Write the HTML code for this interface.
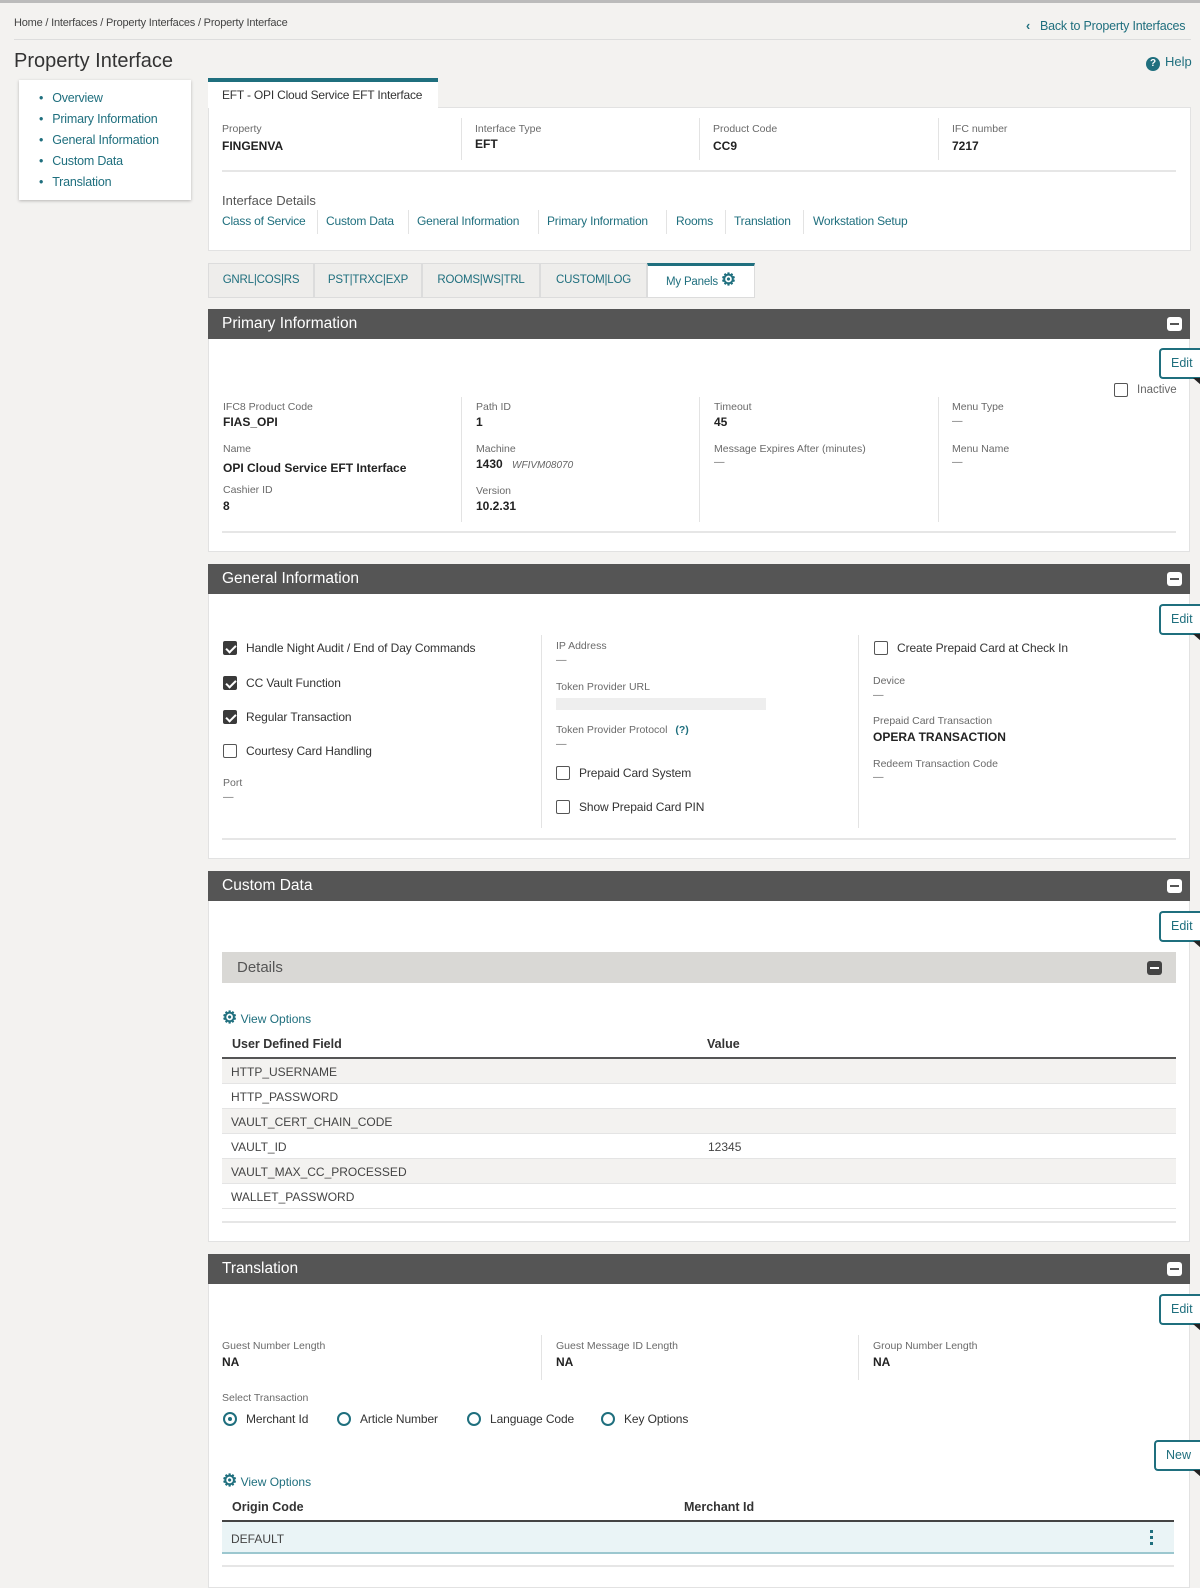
<!DOCTYPE html>
<html><head><meta charset="utf-8"><style>
*{box-sizing:border-box;margin:0;padding:0}
body{width:1200px;height:1588px;background:#f3f2f0;font-family:"Liberation Sans",sans-serif;color:#333;position:relative;overflow:hidden;font-size:12px}
.a{position:absolute;white-space:nowrap}
.lk{color:#1f6f7e}
.lb{font-size:10.5px;color:#6a6a6a}
.v{font-size:12px;font-weight:bold;color:#222}
.box{position:absolute;background:#fff}
.hdr{position:absolute;left:208px;width:982px;height:30px;background:#555;color:#fff;font-size:15.5px;padding:6px 14px}
.min{position:absolute;right:8px;top:8px;width:15px;height:14px;background:#fff;border-radius:3px}
.min:after{content:"";position:absolute;left:3px;top:6px;width:9px;height:2px;background:#555}
.min.dk{background:#444}
.min.dk:after{background:#fff}
.edit{position:absolute;left:1159px;width:42px;height:31px;border:2px solid #1f6f7e;border-right:none;border-radius:4px 0 0 4px;background:#fff;color:#1f6f7e;font-size:12.5px;padding:6px 0 0 10px}
.edit:after{content:"";position:absolute;right:0;bottom:-8px;border-left:8px solid transparent;border-top:7px solid #222}
.vl{position:absolute;width:1px;background:#e3e3e3}
.hl{position:absolute;height:2px;background:#e6e6e6}
.cb{position:absolute;width:14px;height:14px;border:1.5px solid #555;border-radius:2px;background:#fff}
.cb.on{background:#3a3a3a;border-color:#3a3a3a}
.cb.on:after{content:"";position:absolute;left:3.5px;top:0.5px;width:4px;height:8px;border:solid #fff;border-width:0 2px 2px 0;transform:rotate(45deg)}
.rd{position:absolute;width:14px;height:14px;border:2px solid #1f6f7e;border-radius:50%}
.rd.on:after{content:"";position:absolute;left:3px;top:3px;width:4px;height:4px;border-radius:50%;background:#1f6f7e}
.ct{font-size:12px;color:#333;letter-spacing:-0.1px}
.row{position:absolute;left:222px;width:954px;height:25px;border-bottom:1px solid #e4e4e4;font-size:12px;padding:6px 0 0 9px;color:#444}
.tab{position:absolute;top:263px;height:35px;background:#eeedeb;border:1px solid #dcdcdc;color:#1f6f7e;font-size:11.5px;text-align:center;padding-top:10px;letter-spacing:-0.2px}
.gear{font-size:17px;line-height:12px;font-weight:bold}
</style></head><body>
<div class="a" style="left:0;top:0;width:1200px;height:3px;background:#bbb"></div>
<div class="a" style="left:14px;top:17px;font-size:11px;color:#444;letter-spacing:-0.2px">Home / Interfaces / Property Interfaces / Property Interface</div>
<div class="a lk" style="left:1026px;top:19px;font-size:12.5px;letter-spacing:-0.2px"><b style="margin-right:10px">&#8249;</b>Back to Property Interfaces</div>
<div class="a" style="left:14px;top:39px;width:1177px;height:1px;background:#ddd"></div>
<div class="a" style="left:14px;top:50px;font-size:20px;color:#333">Property Interface</div>
<div class="a lk" style="left:1146px;top:54px;font-size:13px"><span style="display:inline-block;width:14px;height:14px;border-radius:50%;background:#1f6f7e;color:#fff;font-size:10px;font-weight:bold;text-align:center;line-height:14px;margin-right:5px">?</span>Help</div>

<div class="box" style="left:19px;top:80px;width:172px;height:120px;box-shadow:0 1px 3px rgba(0,0,0,.25)"></div>
<div class="a lk" style="left:39px;top:88px;font-size:12.5px;line-height:21px;letter-spacing:-0.2px">
<div><span style="margin-right:9px">&#8226;</span>Overview</div>
<div><span style="margin-right:9px">&#8226;</span>Primary Information</div>
<div><span style="margin-right:9px">&#8226;</span>General Information</div>
<div><span style="margin-right:9px">&#8226;</span>Custom Data</div>
<div><span style="margin-right:9px">&#8226;</span>Translation</div></div>

<div class="box" style="left:208px;top:107px;width:983px;height:144px;border:1px solid #e2e2e2"></div>
<div class="box" style="left:208px;top:78px;width:230px;height:30px;border-top:4px solid #1f6f7e"></div>
<div class="a" style="left:222px;top:88px;font-size:12px;letter-spacing:-0.2px">EFT - OPI Cloud Service EFT Interface</div>
<div class="a lb" style="left:222px;top:123px">Property</div><div class="a v" style="left:222px;top:139px">FINGENVA</div>
<div class="a lb" style="left:475px;top:123px">Interface Type</div><div class="a v" style="left:475px;top:137px">EFT</div>
<div class="a lb" style="left:713px;top:123px">Product Code</div><div class="a v" style="left:713px;top:139px">CC9</div>
<div class="a lb" style="left:952px;top:123px">IFC number</div><div class="a v" style="left:952px;top:139px">7217</div>
<div class="vl" style="left:461px;top:118px;height:42px"></div><div class="vl" style="left:699px;top:118px;height:42px"></div><div class="vl" style="left:938px;top:118px;height:42px"></div>
<div class="hl" style="left:222px;top:170px;width:954px"></div>
<div class="a" style="left:222px;top:193px;font-size:13px;color:#555">Interface Details</div>
<div class="a lk" style="left:222px;top:214px;font-size:12px;letter-spacing:-0.2px">Class of Service</div>
<div class="a lk" style="left:326px;top:214px;font-size:12px;letter-spacing:-0.2px">Custom Data</div>
<div class="a lk" style="left:417px;top:214px;font-size:12px;letter-spacing:-0.2px">General Information</div>
<div class="a lk" style="left:547px;top:214px;font-size:12px;letter-spacing:-0.2px">Primary Information</div>
<div class="a lk" style="left:676px;top:214px;font-size:12px;letter-spacing:-0.2px">Rooms</div>
<div class="a lk" style="left:734px;top:214px;font-size:12px;letter-spacing:-0.2px">Translation</div>
<div class="a lk" style="left:813px;top:214px;font-size:12px;letter-spacing:-0.2px">Workstation Setup</div>
<div class="vl" style="left:317px;top:210px;height:24px"></div><div class="vl" style="left:408px;top:210px;height:24px"></div><div class="vl" style="left:538px;top:210px;height:24px"></div><div class="vl" style="left:666px;top:210px;height:24px"></div><div class="vl" style="left:725px;top:210px;height:24px"></div><div class="vl" style="left:803px;top:210px;height:24px"></div>

<div class="tab" style="left:208px;width:106px">GNRL|COS|RS</div>
<div class="tab" style="left:314px;width:108px">PST|TRXC|EXP</div>
<div class="tab" style="left:422px;width:118px">ROOMS|WS|TRL</div>
<div class="tab" style="left:540px;width:107px">CUSTOM|LOG</div>
<div class="tab" style="left:647px;width:108px;background:#fff;border-top:3px solid #1f6f7e;padding-top:8px">My Panels <span class="gear">&#9881;</span></div>

<!-- Primary -->
<div class="box" style="left:208px;top:309px;width:982px;height:243px;border:1px solid #e2e2e2"></div>
<div class="hdr" style="top:309px">Primary Information<div class="min"></div></div>
<div class="edit" style="top:348px">Edit</div>
<div class="cb" style="left:1114px;top:383px"></div><div class="a" style="left:1137px;top:384px;font-size:11.5px;color:#666">Inactive</div>
<div class="a lb" style="left:223px;top:401px">IFC8 Product Code</div><div class="a v" style="left:223px;top:415px">FIAS_OPI</div>
<div class="a lb" style="left:223px;top:443px">Name</div><div class="a v" style="left:223px;top:461px">OPI Cloud Service EFT Interface</div>
<div class="a lb" style="left:223px;top:484px">Cashier ID</div><div class="a v" style="left:223px;top:499px">8</div>
<div class="a lb" style="left:476px;top:401px">Path ID</div><div class="a v" style="left:476px;top:415px">1</div>
<div class="a lb" style="left:476px;top:443px">Machine</div><div class="a v" style="left:476px;top:457px">1430 <i style="font-weight:normal;font-size:10px;color:#666;margin-left:6px">WFIVM08070</i></div>
<div class="a lb" style="left:476px;top:485px">Version</div><div class="a v" style="left:476px;top:499px">10.2.31</div>
<div class="a lb" style="left:714px;top:401px">Timeout</div><div class="a v" style="left:714px;top:415px">45</div>
<div class="a lb" style="left:714px;top:443px">Message Expires After (minutes)</div><div class="a lb" style="left:714px;top:456px">—</div>
<div class="a lb" style="left:952px;top:401px">Menu Type</div><div class="a lb" style="left:952px;top:415px">—</div>
<div class="a lb" style="left:952px;top:443px">Menu Name</div><div class="a lb" style="left:952px;top:456px">—</div>
<div class="vl" style="left:461px;top:397px;height:125px"></div><div class="vl" style="left:699px;top:397px;height:125px"></div><div class="vl" style="left:938px;top:397px;height:125px"></div>
<div class="hl" style="left:222px;top:531px;width:954px"></div>

<!-- General -->
<div class="box" style="left:208px;top:564px;width:982px;height:295px;border:1px solid #e2e2e2"></div>
<div class="hdr" style="top:564px">General Information<div class="min"></div></div>
<div class="edit" style="top:604px">Edit</div>
<div class="cb on" style="left:223px;top:641px"></div><div class="a ct" style="left:246px;top:641px">Handle Night Audit / End of Day Commands</div>
<div class="cb on" style="left:223px;top:676px"></div><div class="a ct" style="left:246px;top:676px">CC Vault Function</div>
<div class="cb on" style="left:223px;top:710px"></div><div class="a ct" style="left:246px;top:710px">Regular Transaction</div>
<div class="cb" style="left:223px;top:744px"></div><div class="a ct" style="left:246px;top:744px">Courtesy Card Handling</div>
<div class="a lb" style="left:223px;top:777px">Port</div><div class="a lb" style="left:223px;top:791px">—</div>
<div class="a lb" style="left:556px;top:640px">IP Address</div><div class="a lb" style="left:556px;top:654px">—</div>
<div class="a lb" style="left:556px;top:681px">Token Provider URL</div>
<div class="a" style="left:556px;top:698px;width:210px;height:12px;background:#eee"></div>
<div class="a lb" style="left:556px;top:724px">Token Provider Protocol <b class="lk" style="margin-left:5px">(?)</b></div><div class="a lb" style="left:556px;top:738px">—</div>
<div class="cb" style="left:556px;top:766px"></div><div class="a ct" style="left:579px;top:766px">Prepaid Card System</div>
<div class="cb" style="left:556px;top:800px"></div><div class="a ct" style="left:579px;top:800px">Show Prepaid Card PIN</div>
<div class="cb" style="left:874px;top:641px"></div><div class="a ct" style="left:897px;top:641px">Create Prepaid Card at Check In</div>
<div class="a lb" style="left:873px;top:675px">Device</div><div class="a lb" style="left:873px;top:689px">—</div>
<div class="a lb" style="left:873px;top:715px">Prepaid Card Transaction</div><div class="a v" style="left:873px;top:730px">OPERA TRANSACTION</div>
<div class="a lb" style="left:873px;top:758px">Redeem Transaction Code</div><div class="a lb" style="left:873px;top:771px">—</div>
<div class="vl" style="left:541px;top:635px;height:193px"></div><div class="vl" style="left:858px;top:635px;height:193px"></div>
<div class="hl" style="left:222px;top:838px;width:954px"></div>

<!-- Custom Data -->
<div class="box" style="left:208px;top:871px;width:982px;height:371px;border:1px solid #e2e2e2"></div>
<div class="hdr" style="top:871px">Custom Data<div class="min"></div></div>
<div class="edit" style="top:911px">Edit</div>
<div class="a" style="left:222px;top:952px;width:954px;height:31px;background:#d9d8d5;font-size:15px;color:#555;padding:7px 15px">Details<div class="min dk" style="top:9px;right:14px"></div></div>
<div class="a lk" style="left:222px;top:1012px;font-size:12px"><span class="gear">&#9881;</span> View Options</div>
<div class="a" style="left:232px;top:1037px;font-size:12.5px;font-weight:bold">User Defined Field</div>
<div class="a" style="left:707px;top:1037px;font-size:12.5px;font-weight:bold">Value</div>
<div class="a" style="left:222px;top:1057px;width:954px;height:2px;background:#555"></div>
<div class="row" style="top:1059px;background:#f3f2f0">HTTP_USERNAME</div>
<div class="row" style="top:1084px">HTTP_PASSWORD</div>
<div class="row" style="top:1109px;background:#f3f2f0">VAULT_CERT_CHAIN_CODE</div>
<div class="row" style="top:1134px">VAULT_ID<span style="position:absolute;left:486px">12345</span></div>
<div class="row" style="top:1159px;background:#f3f2f0">VAULT_MAX_CC_PROCESSED</div>
<div class="row" style="top:1184px">WALLET_PASSWORD</div>
<div class="hl" style="left:222px;top:1221px;width:954px"></div>

<!-- Translation -->
<div class="box" style="left:208px;top:1254px;width:982px;height:334px;border:1px solid #e2e2e2"></div>
<div class="hdr" style="top:1254px">Translation<div class="min"></div></div>
<div class="edit" style="top:1294px">Edit</div>
<div class="a lb" style="left:222px;top:1340px">Guest Number Length</div><div class="a v" style="left:222px;top:1355px">NA</div>
<div class="a lb" style="left:556px;top:1340px">Guest Message ID Length</div><div class="a v" style="left:556px;top:1355px">NA</div>
<div class="a lb" style="left:873px;top:1340px">Group Number Length</div><div class="a v" style="left:873px;top:1355px">NA</div>
<div class="vl" style="left:541px;top:1335px;height:45px"></div><div class="vl" style="left:858px;top:1335px;height:45px"></div>
<div class="a lb" style="left:222px;top:1392px">Select Transaction</div>
<div class="rd on" style="left:223px;top:1412px"></div><div class="a ct" style="left:246px;top:1412px">Merchant Id</div>
<div class="rd" style="left:337px;top:1412px"></div><div class="a ct" style="left:360px;top:1412px">Article Number</div>
<div class="rd" style="left:467px;top:1412px"></div><div class="a ct" style="left:490px;top:1412px">Language Code</div>
<div class="rd" style="left:601px;top:1412px"></div><div class="a ct" style="left:624px;top:1412px">Key Options</div>
<div class="edit" style="left:1154px;width:47px;top:1440px">New</div>
<div class="a lk" style="left:222px;top:1475px;font-size:12px"><span class="gear">&#9881;</span> View Options</div>
<div class="a" style="left:232px;top:1500px;font-size:12.5px;font-weight:bold">Origin Code</div>
<div class="a" style="left:684px;top:1500px;font-size:12.5px;font-weight:bold">Merchant Id</div>
<div class="a" style="left:222px;top:1520px;width:952px;height:2px;background:#444"></div>
<div class="a" style="left:222px;top:1522px;width:952px;height:32px;background:#eaf4f6;border-bottom:2px solid #9cc7cf;font-size:12px;color:#444;padding:10px 9px">DEFAULT
<div style="position:absolute;right:21px;top:8px;width:3px;line-height:0">
<div style="width:3px;height:3px;background:#1f6f7e;margin-bottom:3px"></div><div style="width:3px;height:3px;background:#1f6f7e;margin-bottom:3px"></div><div style="width:3px;height:3px;background:#1f6f7e"></div></div></div>
<div class="hl" style="left:222px;top:1565px;width:952px"></div>
</body></html>
